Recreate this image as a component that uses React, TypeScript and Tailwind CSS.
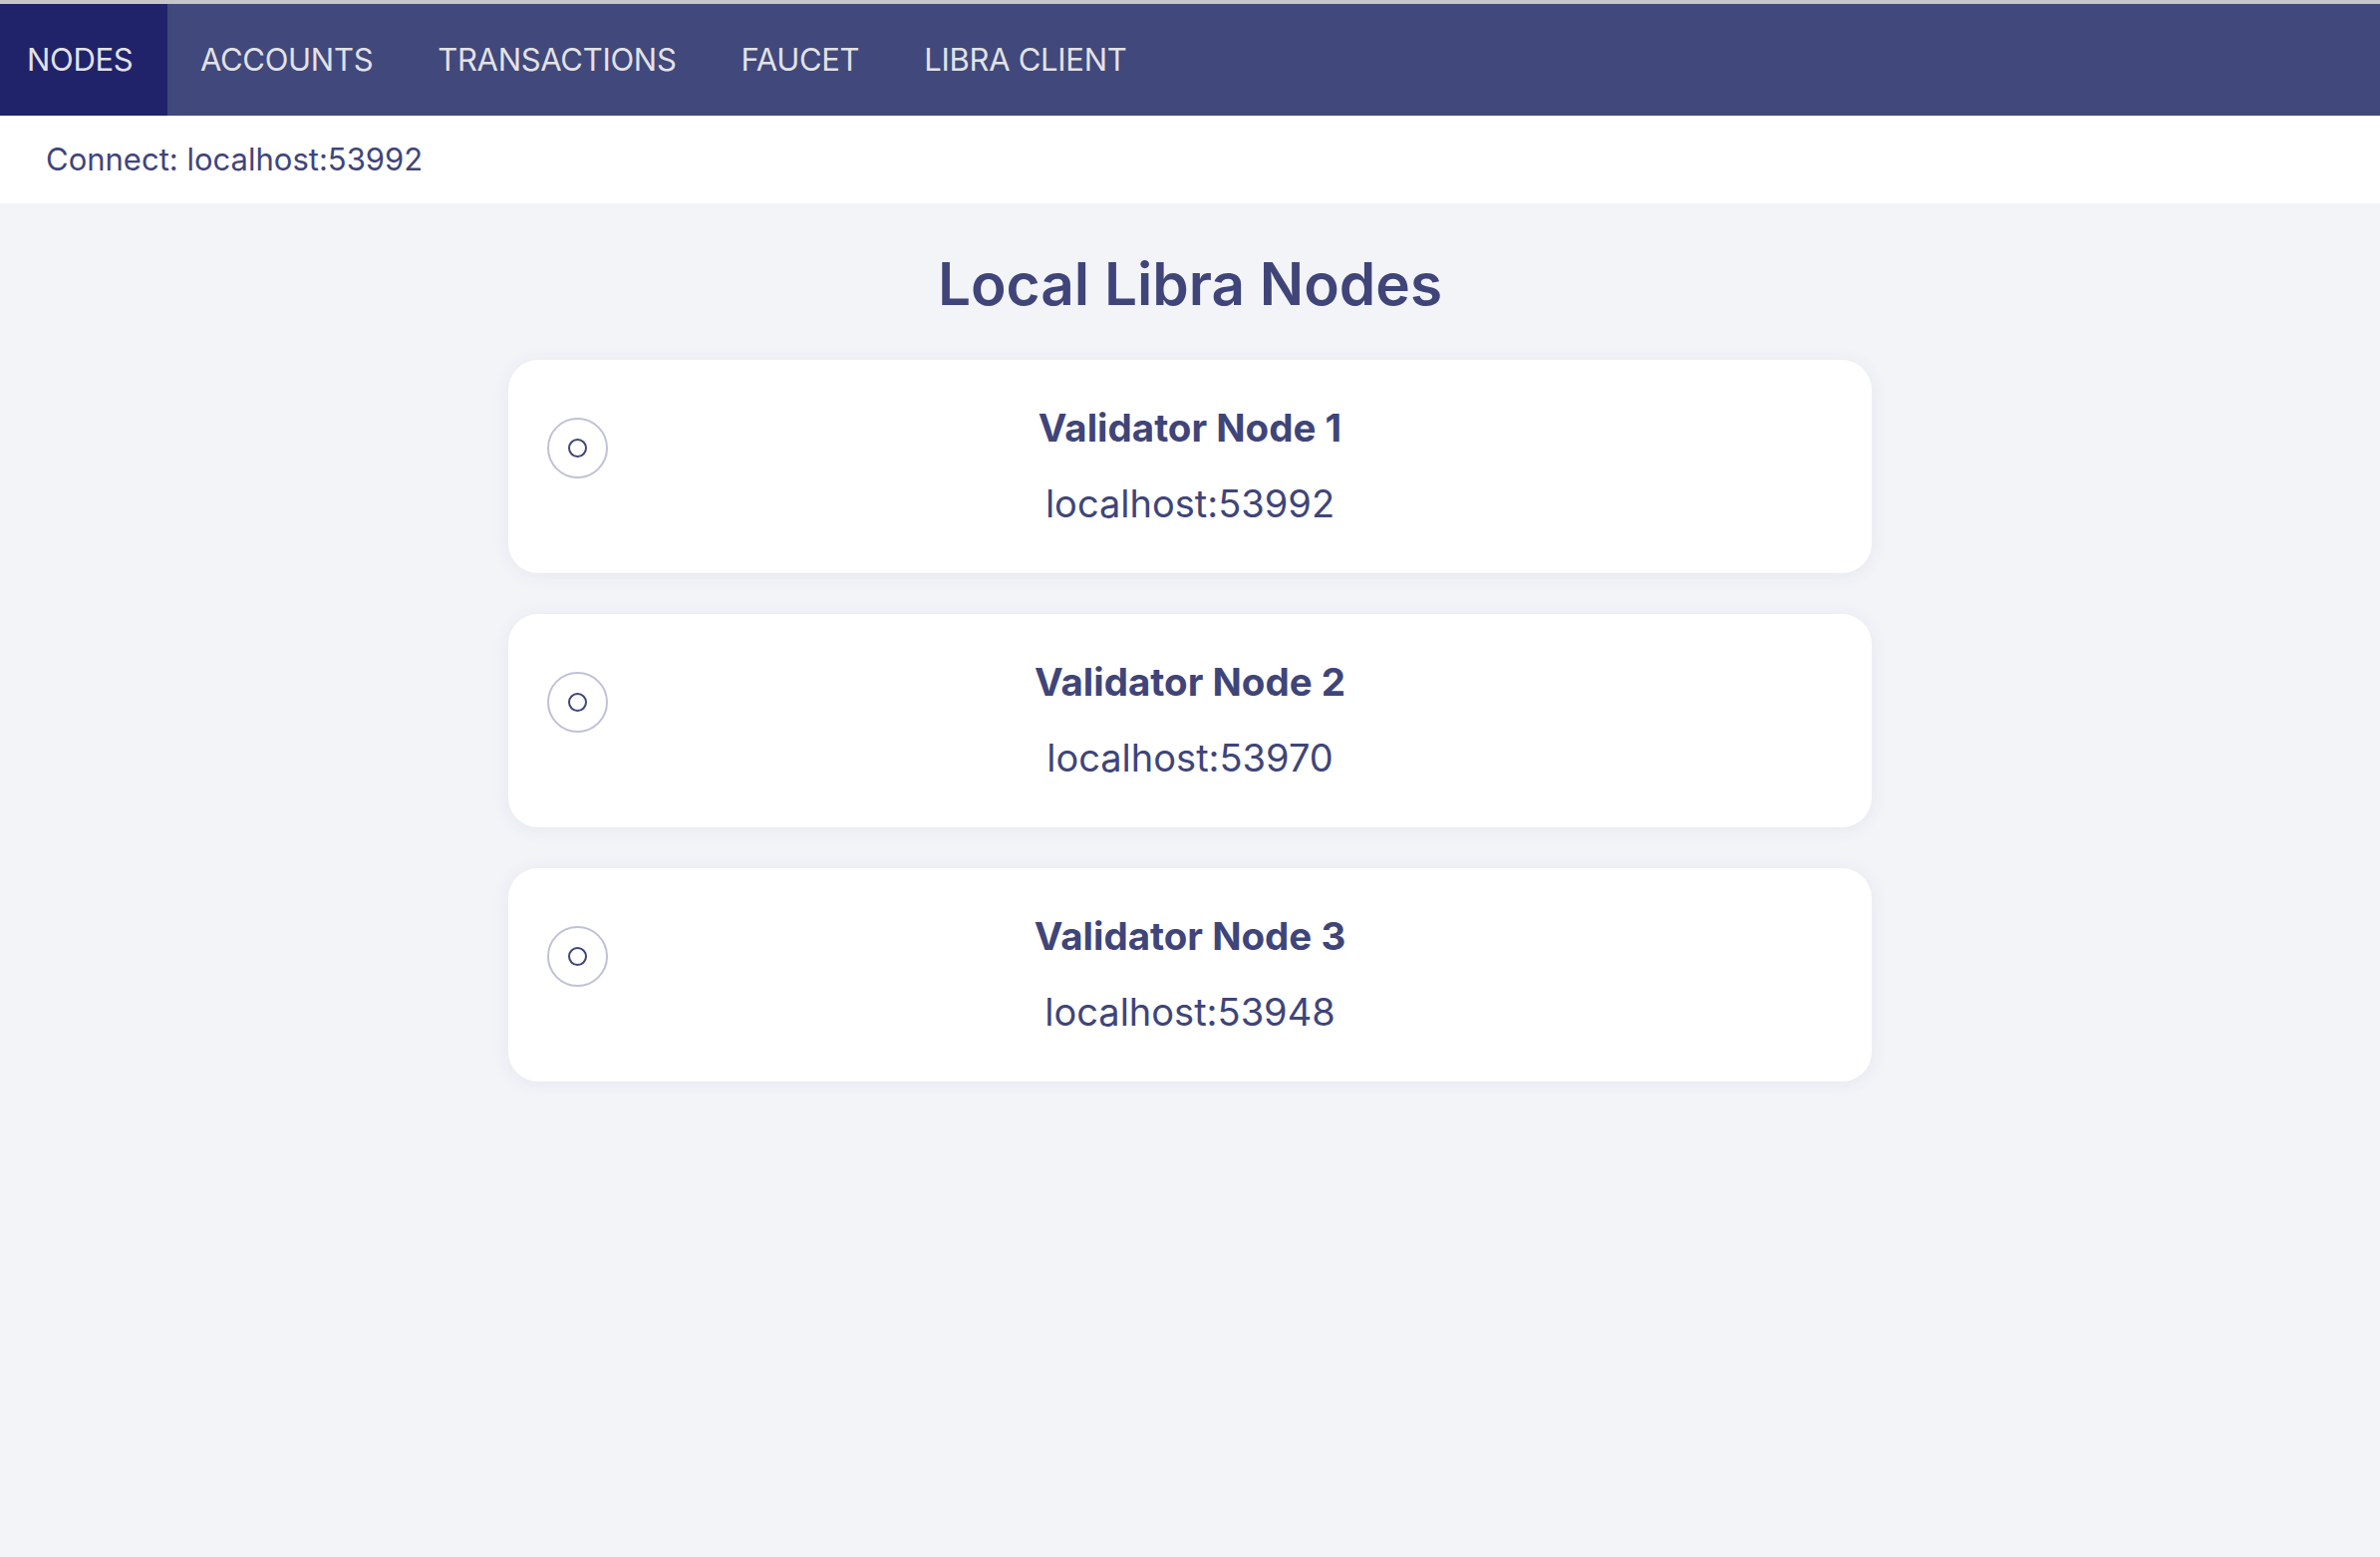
import { useState } from 'react';

// ─── Data ─────────────────────────────────────────────────────────────────────

const TABS = ['NODES', 'ACCOUNTS', 'TRANSACTIONS', 'FAUCET', 'LIBRA CLIENT'];

const NODES = [
    { name: 'Validator Node 1', address: 'localhost:53992' },
    { name: 'Validator Node 2', address: 'localhost:53970' },
    { name: 'Validator Node 3', address: 'localhost:53948' },
];

// ─── Pieces ───────────────────────────────────────────────────────────────────

function Radio() {
    return (
        <div className="flex h-[61px] w-[61px] shrink-0 items-center justify-center rounded-full border-2 border-[#bfc2d6]">
            <div className="h-[19px] w-[19px] rounded-full border-2 border-[#3f4579]" />
        </div>
    );
}

function NodeCard({ name, address }: { name: string; address: string }) {
    return (
        <div className="flex w-[1368px] items-start rounded-[30px] bg-white px-[39px] pt-[45px] pb-[47px] shadow-[0_2px_18px_rgba(60,70,130,0.07)]">
            <div className="mt-[13px]">
                <Radio />
            </div>
            <div className="flex flex-1 flex-col items-center gap-[31px]">
                <div className="text-[38.5px] leading-[46px] font-bold text-[#3f4579]">{name}</div>
                <div className="text-[38px] leading-[45px] text-[#3f4579]">{address}</div>
            </div>
            <div className="w-[61px] shrink-0" />
        </div>
    );
}

// ─── Page ─────────────────────────────────────────────────────────────────────

export default function App() {
    const [active, setActive] = useState('NODES');

    return (
        <div
            className="flex min-h-[1562px] flex-col border-t-4 border-[#c6c6c6] bg-[#f3f4f8]"
            style={{ fontFamily: 'Inter, "Liberation Sans", sans-serif' }}
        >
            <nav className="flex h-[112px] items-stretch bg-[#41487b]">
                {TABS.map((t, i) => (
                    <button
                        key={t}
                        onClick={() => setActive(t)}
                        className={
                            'flex items-center text-[31px] tracking-[-0.3px] text-[#e2e2e6] ' +
                            (i === 0 ? 'pr-[35px] pl-[27px] ' : 'px-[32.5px] ') +
                            (active === t ? 'bg-[#20236a]' : '')
                        }
                    >
                        {t}
                    </button>
                ))}
            </nav>

            <div className="flex h-[88px] items-center bg-white px-[46px] text-[31px] text-[#3f4579]">
                Connect: localhost:53992
            </div>

            <main className="flex flex-col items-center">
                <h1 className="mt-[45px] mb-[40px] text-[58.5px] leading-[72px] font-semibold text-[#3f4579]">
                    Local Libra Nodes
                </h1>
                <div className="flex flex-col gap-[41px]">
                    {NODES.map((n) => (
                        <NodeCard key={n.name} name={n.name} address={n.address} />
                    ))}
                </div>
            </main>
        </div>
    );
}
